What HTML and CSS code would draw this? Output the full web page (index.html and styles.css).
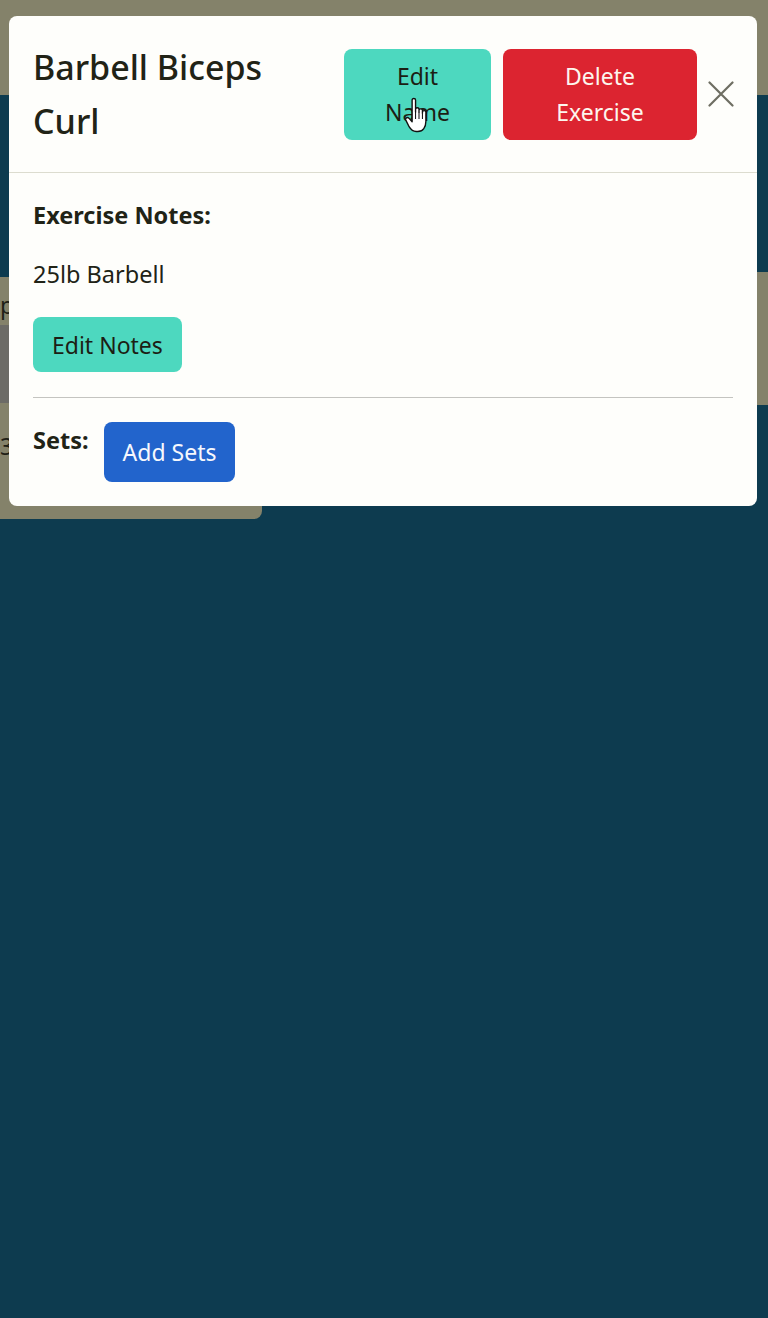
FILE: index.html
```html
<!DOCTYPE html>
<html lang="en">
<head>
<meta charset="utf-8">
<title>Barbell Biceps Curl</title>
<link rel="stylesheet" href="styles.css">
</head>
<body>
<div class="page">
  <div class="topbar"></div>
  <div class="content">
    <div class="card card-left">
      <div class="card-title">p</div>
      <div class="card-media"></div>
      <div class="card-meta">3</div>
    </div>
    <div class="card card-right"></div>
  </div>
</div>

<div class="modal">
  <div class="modal-header">
    <h2 class="modal-title">Barbell Biceps Curl</h2>
    <div class="header-actions">
      <button class="btn btn-info btn-edit-name">Edit<br>Name</button>
      <button class="btn btn-danger btn-delete">Delete<br>Exercise</button>
      <button class="btn-close" aria-label="Close">
        <svg width="26" height="26" viewBox="0 0 26 26"><path d="M1.5 1.5 L24.5 24.5 M24.5 1.5 L1.5 24.5" stroke="#6e6e62" stroke-width="2.2" fill="none" stroke-linecap="round"/></svg>
      </button>
    </div>
  </div>
  <div class="modal-body">
    <h3 class="section-label">Exercise Notes:</h3>
    <p class="notes">25lb Barbell</p>
    <button class="btn btn-info">Edit Notes</button>
    <hr class="divider">
    <div class="sets-row">
      <h3 class="section-label">Sets:</h3>
      <button class="btn btn-primary btn-add">Add Sets</button>
    </div>
  </div>
  <svg class="cursor" width="30" height="39" viewBox="0 0 26 34">
    <path d="M7 3.5 C7 1.8 10 1.8 10 3.5 L10 14 L10 11.5 C10 9.8 13 9.8 13 11.5 L13 14 L13 12.5 C13 10.8 16 10.8 16 12.5 L16 15 L16 14 C16 12.3 19 12.3 19 14 L19 22 C19 27 16.5 31 12 31 L10.5 31 C7.5 31 6 29.5 4.5 27 L1.5 21 C0.8 19.5 2.8 18 4.2 19.3 L7 22.5 Z" fill="#ffffff" stroke="#111" stroke-width="1.2" stroke-linejoin="round"/>
    <path d="M10 14 L10 20 M13 14 L13 20 M16 15 L16 20" stroke="#111" stroke-width="0.9"/>
  </svg>
</div>
</body>
</html>
```

FILE: styles.css
```css
* { box-sizing: border-box; }

html, body {
  margin: 0;
  padding: 0;
}

body {
  width: 768px;
  height: 1318px;
  background: #0d3b4f;
  font-family: "Noto Sans", "Open Sans", sans-serif;
  color: #212316;
  position: relative;
  overflow: hidden;
}

/* background page (under backdrop) */
.topbar {
  height: 95px;
  background: #84826a;
}

.content {
  display: flex;
  justify-content: space-between;
  align-items: flex-start;
}

.card {
  background: #84826a;
}

.card-left {
  width: 262px;
  height: 242px;
  margin-top: 182px;
  border-radius: 0 0 8px 0;
  display: flex;
  flex-direction: column;
  font-size: 23px;
  color: #1e1e16;
}

.card-title {
  height: 48px;
  line-height: 40px;
  padding-top: 8px;
}

.card-media {
  height: 78px;
  background: #6c6b66;
}

.card-meta {
  padding-top: 28px;
  line-height: 30px;
}

.card-right {
  width: 11px;
  height: 133px;
  margin-top: 177px;
}

/* modal */
.modal {
  position: absolute;
  top: 16px;
  left: 9px;
  width: 748px;
  background: #fefefb;
  border-radius: 8px;
}

.modal-header {
  display: flex;
  align-items: center;
  padding: 24px 23px 24px 24px;
  border-bottom: 1px solid #dcdccf;
}

.modal-title {
  flex: 1;
  min-width: 0;
  max-width: 260px;
  margin: 0 auto 0 0;
  font-size: 34px;
  font-weight: 500;
  line-height: 54px;
}

.header-actions {
  display: flex;
  align-items: center;
  gap: 12px;
  margin-left: auto;
}

.btn {
  border: none;
  border-radius: 8px;
  font-family: inherit;
  font-size: 23px;
  line-height: 36px;
  padding: 9.5px 19px;
  cursor: pointer;
}

.btn-info {
  background: #4dd8bf;
  color: #1c1e14;
}

.btn-danger {
  background: #dc2430;
  color: #fdf6ee;
}

.btn-primary {
  background: #2264cc;
  color: #f6f8fd;
}

.btn-edit-name {
  width: 147px;
}

.btn-delete {
  width: 194px;
}

.btn-close {
  border: none;
  background: none;
  padding: 0;
  margin-left: -1px;
  width: 26px;
  height: 26px;
  display: flex;
}

.modal-body {
  padding: 24px;
}

.section-label {
  margin: 0 0 23px;
  font-size: 23.5px;
  font-weight: 700;
  line-height: 36px;
}

.notes {
  margin: 0 0 25px;
  font-size: 23.5px;
  line-height: 36px;
}

.divider {
  margin: 25px 0 24px;
  border: none;
  border-top: 1px solid #c4c4c0;
}

.sets-row {
  display: flex;
  align-items: flex-start;
  gap: 15px;
}

.sets-row .section-label {
  margin: 0;
}

.btn-add {
  padding: 12px 19px;
}

.cursor {
  position: absolute;
  left: 395px;
  top: 80px;
}
```
